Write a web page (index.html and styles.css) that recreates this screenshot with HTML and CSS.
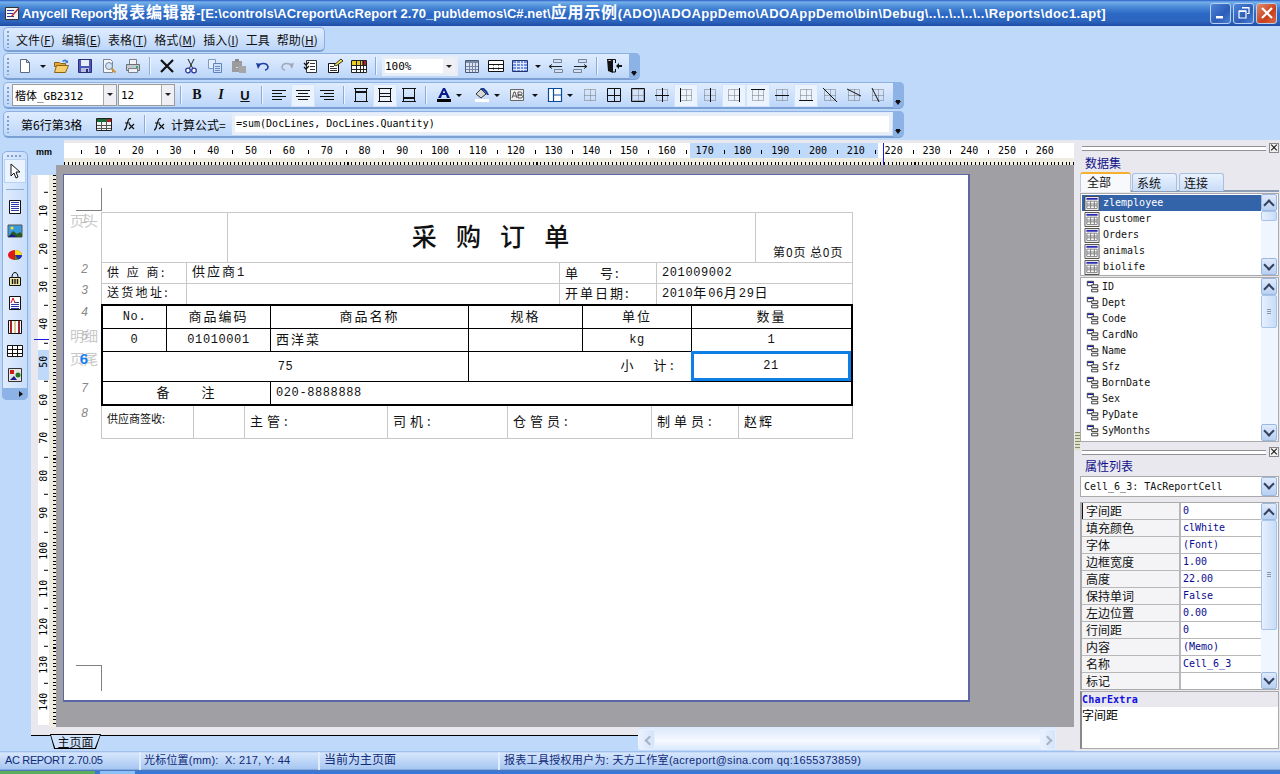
FILE: index.html
```html
<!DOCTYPE html>
<html lang="zh">
<head>
<meta charset="utf-8">
<title>Anycell Report</title>
<link rel="stylesheet" href="styles.css">
</head>
<body>
<svg class="defs" xmlns="http://www.w3.org/2000/svg">
<symbol id="i-new" viewBox="0 0 16 16"><path d="M3.500 1.500h6l3 3v10h-9z" fill="#fff" stroke="#5a6a80"/><path d="M9.500 1.500v3h3z" fill="#cfd8e4" stroke="#5a6a80"/></symbol>
<symbol id="i-open" viewBox="0 0 16 16"><path d="M1.500 4.500h5l1 1h5v3h-11z" fill="#e0a93a" stroke="#8a6414"/><path d="M1.500 14.500l2-7h12l-3 7z" fill="#f6cf6c" stroke="#8a6414"/><path d="M9 3c2-2 4-2 5 0l1-1v3h-3l1-1c-1-1-2-1-3 0" fill="#3a7ad0"/></symbol>
<symbol id="i-save" viewBox="0 0 16 16"><path d="M1.500 1.500h13v13h-13z" fill="#4a58b8" stroke="#2a2f78"/><path d="M4 2h8v6H4z" fill="#e8ecf4"/><path d="M4 10h8v4H4z" fill="#b8bcd8"/><path d="M9 11h2v3H9z" fill="#2a2f78"/></symbol>
<symbol id="i-prev" viewBox="0 0 16 16"><path d="M2.500 1.500h7l2 2v11h-9z" fill="#f4f6fa" stroke="#7a8494"/><circle cx="8" cy="8" r="3.500" fill="#cfe4f8" stroke="#7a8494"/><path d="M10.500 10.500l4 4" stroke="#d8942a" stroke-width="2"/></symbol>
<symbol id="i-print" viewBox="0 0 16 16"><path d="M4.500 1.500h7v5h-7z" fill="#f0f2f6" stroke="#7a8088"/><path d="M1.500 6.500h13v6h-13z" fill="#c4c8d0" stroke="#6a7078"/><path d="M3.500 10.500h9v4h-9z" fill="#eef0f4" stroke="#7a8088"/><path d="M11 8h2v2h-2z" fill="#2ab24a"/></symbol>
<symbol id="i-del" viewBox="0 0 16 16"><path d="M2 2l12 12M14 2L2 14" stroke="#111" stroke-width="2.200" fill="none"/></symbol>
<symbol id="i-cut" viewBox="0 0 16 16"><path d="M5 1l4.500 9M11 1L6.500 10" stroke="#222" fill="none"/><circle cx="5" cy="12.500" r="2.300" fill="#fff" stroke="#2a3aa0" stroke-width="1.300"/><circle cx="11" cy="12.500" r="2.300" fill="#fff" stroke="#2a3aa0" stroke-width="1.300"/></symbol>
<symbol id="i-copy" viewBox="0 0 16 16"><path d="M1.500 1.500h7v9h-7z" fill="#e4eefa" stroke="#7f9ac4"/><path d="M6.500 5.500h8v9h-8z" fill="#cfe0f6" stroke="#5f84bc"/><path d="M8 8.500h5M8 10.500h5M8 12.500h5" stroke="#6a8cc4"/></symbol>
<symbol id="i-paste" viewBox="0 0 16 16"><path d="M1 3h10v11H1z" fill="#9c9c9e"/><path d="M8 8h7v7H8z" fill="#a6a6a8"/><path d="M4 1h4v3H4z" fill="#8c8c8e"/><path d="M5 9h2v1H5z" fill="#d8d8d8"/></symbol>
<symbol id="i-undo" viewBox="0 0 16 16"><path d="M3 8c2-3 9-4 10 1 0 2-2 3-3 3" fill="none" stroke="#1c3fa4" stroke-width="1.600"/><path d="M1 5l5 1-3 5z" fill="#1c3fa4"/></symbol>
<symbol id="i-redo" viewBox="0 0 16 16"><path d="M13 8c-2-3-9-4-10 1 0 2 2 3 3 3" fill="none" stroke="#a4a8b4" stroke-width="1.600"/><path d="M15 5l-5 1 3 5z" fill="#a4a8b4"/></symbol>
<symbol id="i-check" viewBox="0 0 16 16"><path d="M3.500 2.500h10v12h-10z" fill="#fff" stroke="#333"/><path d="M7 5.500h5M7 8.500h5M7 11.500h5" stroke="#333"/><path d="M1 5l2 2 3-3M1 9l2 2 3-3" stroke="#111" fill="none" stroke-width="1.300"/></symbol>
<symbol id="i-prop" viewBox="0 0 16 16"><path d="M1.500 5.500h10v9h-10z" fill="#fff" stroke="#111"/><path d="M3 8.500h4M3 10.500h7M3 12.500h7" stroke="#333"/><path d="M7 7l7-6 2 2-7 5z" fill="#f4e04a" stroke="#333"/></symbol>
<symbol id="i-ctab" viewBox="0 0 16 16"><path d="M.5 2.500h15v12H.5z" fill="#fff" stroke="#222"/><path d="M1 3h10v4H1z" fill="#e8d020"/><path d="M11 3h4v4h-4z" fill="#a02828"/><path d="M1 7.500h14M1 11.500h14M5.500 3v11M9.500 3v11M12.500 3v11" stroke="#222"/></symbol>
<symbol id="i-cal" viewBox="0 0 16 16"><path d="M1.500 2.500h13v12h-13z" fill="#dfe4ee" stroke="#4a5a78"/><path d="M2 3h12v2H2z" fill="#7a8aa4"/><path d="M2 8.500h12M2 11.500h12M5.500 5v9M8.500 5v9M11.500 5v9" stroke="#7486a8"/></symbol>
<symbol id="i-tbl" viewBox="0 0 16 16"><path d="M.5 2.500h15v11H.5z" fill="#fff" stroke="#111"/><path d="M1 6.500h14M1 10.500h14" stroke="#111"/><path d="M5.500 7v6M10.500 7v6" stroke="#888" stroke-dasharray="1 1"/></symbol>
<symbol id="i-bgrid" viewBox="0 0 16 16"><path d="M.5 2.500h15v11H.5z" fill="#6f8fe0" stroke="#24346a"/><path d="M1 5.500h14M1 8.500h14M1 11.500h14M4.500 3v10M8.500 3v10M11.500 3v10" stroke="#dfe8fa"/></symbol>
<symbol id="i-swapl" viewBox="0 0 16 16"><path d="M5.500 1.500h8v3h-8zM6.500 11.500h8v3h-8z" fill="#d4e2f6" stroke="#7a8494"/><path d="M1 8.500h13M1 8.500l3-2M1 8.500l3 2" stroke="#222" fill="none"/></symbol>
<symbol id="i-swapr" viewBox="0 0 16 16"><path d="M6.500 1.500h8v3h-8zM1.500 11.500h8v3h-8z" fill="#d4e2f6" stroke="#7a8494"/><path d="M2 8.500h13M15 8.500l-3-2M15 8.500l-3 2" stroke="#222" fill="none"/></symbol>
<symbol id="i-door" viewBox="0 0 16 16"><path d="M1 1h6v14l-5-2z" fill="#111"/><path d="M2 2h4L3 3z" fill="#fff"/><path d="M7 1.500h2.500V5M9.500 11v3H7" fill="none" stroke="#111"/><path d="M10 8l3-3v2h3v2h-3v2z" fill="#111"/></symbol>
<symbol id="i-left" viewBox="0 0 16 16"><path d="M1 3.500h14M1 6.500h10M1 9.500h14M1 12.500h10" stroke="#111"/></symbol>
<symbol id="i-center" viewBox="0 0 16 16"><path d="M1 3.500h14M3 6.500h10M1 9.500h14M3 12.500h10" stroke="#111"/></symbol>
<symbol id="i-right" viewBox="0 0 16 16"><path d="M1 3.500h14M5 6.500h10M1 9.500h14M5 12.500h10" stroke="#111"/></symbol>
<symbol id="i-vt" viewBox="0 0 16 16"><path d="M1 1.500h14M1 14.500h14" stroke="#111"/><path d="M2.500 2v12M13.500 2v12" stroke="#111"/><path d="M3 5h10" stroke="#111" stroke-width="2"/></symbol>
<symbol id="i-vm" viewBox="0 0 16 16"><path d="M1 1.500h14M1 14.500h14M2.500 2v12M13.500 2v12" stroke="#111"/><path d="M3 6.500h10M3 9.500h10" stroke="#111"/></symbol>
<symbol id="i-vb" viewBox="0 0 16 16"><path d="M1 1.500h14M1 14.500h14M2.500 2v12M13.500 2v12" stroke="#111"/><path d="M3 11h10" stroke="#111" stroke-width="2"/></symbol>
<symbol id="i-fx" viewBox="0 0 16 16"><path d="M4 14c2 0 2-2 3-6l1-3c.5-2 1.500-3 3-2M5 7h5" fill="none" stroke="#111" stroke-width="1.200"/><path d="M9 8l5 5M14 8l-5 5" stroke="#111" stroke-width="1.200"/></symbol>
<symbol id="i-xtab" viewBox="0 0 16 16"><path d="M.5 2.500h15v12H.5z" fill="#f2f2f2" stroke="#222"/><path d="M1 3h14v3H1z" fill="#156a38"/><path d="M11 3h4v3h-4z" fill="#b02020"/><path d="M1 9.500h14M1 12.500h14M5.500 6v8M10.500 6v8" stroke="#555"/></symbol>
<symbol id="i-A" viewBox="0 0 16 16"><path d="M2 11L7 1h2l5 10h-3l-1-3H6l-1 3zM6.800 6h2.400L8 3.300z" fill="#0a1a8a"/><path d="M1 12h14v3H1z" fill="#000"/></symbol>
<symbol id="i-fill" viewBox="0 0 16 16"><path d="M2 7l5-5 5 5-5 4z" fill="#d8d8d8" stroke="#333"/><path d="M6 1h4l3 3 2 4h-2l-2-3z" fill="#1a3a9a"/><path d="M1 12h14v3H1z" fill="#fff"/></symbol>
<symbol id="i-AB" viewBox="0 0 16 16"><path d="M1.500 2.500h13v11h-13z" fill="#f0f0f0" stroke="#666"/><path d="M3 11l2-6h1l2 6M4 9h3M9 5v6h3a1.500 1.500 0 0 0 0-3H9m0 0h2.500a1.500 1.500 0 0 0 0-3H9" fill="none" stroke="#333" stroke-width=".8"/></symbol>
<symbol id="i-panes" viewBox="0 0 16 16"><path d="M1.500 1.500h13v13h-13zM6.500 1.500v13M6.500 8h8" fill="#fff" stroke="#0a4a9a" stroke-width="1.200"/></symbol>
<symbol id="dg" viewBox="0 0 16 16"><path d="M2.500 2.500h11v11h-11zM2.500 8.500h11M8.500 2.500v11" fill="none" stroke="#777" stroke-dasharray="1 1"/></symbol>
<symbol id="b-none" viewBox="0 0 16 16"><use href="#dg"/></symbol>
<symbol id="b-all" viewBox="0 0 16 16"><path d="M1.500 1.500h13v13h-13zM1.500 8.500h13M8.500 1.500v13" fill="none" stroke="#111"/></symbol>
<symbol id="b-out" viewBox="0 0 16 16"><use href="#dg"/><path d="M1.500 1.500h13v13h-13z" fill="none" stroke="#111"/></symbol>
<symbol id="b-in" viewBox="0 0 16 16"><use href="#dg"/><path d="M1 8.500h14M8.500 1v14" fill="none" stroke="#111"/></symbol>
<symbol id="b-l" viewBox="0 0 16 16"><use href="#dg"/><path d="M2.500 1v14" stroke="#111"/></symbol>
<symbol id="b-c" viewBox="0 0 16 16"><use href="#dg"/><path d="M8.500 1v14" stroke="#111"/></symbol>
<symbol id="b-r" viewBox="0 0 16 16"><use href="#dg"/><path d="M13.500 1v14" stroke="#111"/></symbol>
<symbol id="b-t" viewBox="0 0 16 16"><use href="#dg"/><path d="M1 2.500h14" stroke="#111"/></symbol>
<symbol id="b-m" viewBox="0 0 16 16"><use href="#dg"/><path d="M1 8.500h14" stroke="#111"/></symbol>
<symbol id="b-b" viewBox="0 0 16 16"><use href="#dg"/><path d="M1 13.500h14" stroke="#111"/></symbol>
<symbol id="b-d1" viewBox="0 0 16 16"><use href="#dg"/><path d="M1 1l14 14" stroke="#111"/></symbol>
<symbol id="b-d2" viewBox="0 0 16 16"><use href="#dg"/><path d="M1 2l14 7" stroke="#111"/></symbol>
<symbol id="b-d3" viewBox="0 0 16 16"><use href="#dg"/><path d="M2 1l7 14" stroke="#111"/></symbol>
<symbol id="p-arrow" viewBox="0 0 16 16"><path d="M4 1v12l3-3 2 5 2-1-2-5h4z" fill="#fff" stroke="#111"/></symbol>
<symbol id="p-text" viewBox="0 0 16 16"><path d="M2.500 1.500h11v13h-11z" fill="#fff" stroke="#111"/><path d="M4 3.500h8M4 5.500h8M4 7.500h8M4 9.500h8M4 11.500h8" stroke="#2a3aa8"/></symbol>
<symbol id="p-img" viewBox="0 0 16 16"><path d="M1 2h14v12H1z" fill="#3a9ae0" stroke="#555"/><path d="M1 14l5-6 4 3 3-2 2 2v3z" fill="#2a5a20"/><path d="M1 14l4-3 5 3z" fill="#1a1a90"/><circle cx="5" cy="5" r="1.500" fill="#f4e820"/></symbol>
<symbol id="p-pie" viewBox="0 0 16 16"><path d="M8 3a7 5 0 1 0 .01 0z" fill="#e01818"/><path d="M8 8V3a7 5 0 0 1 7 5z" fill="#f0e020"/><path d="M8 8h7a7 5 0 0 1-4 4.500z" fill="#1a2ab8"/><path d="M8 8l3 4.500a7 5 0 0 1-3 .5z" fill="#20a020"/></symbol>
<symbol id="p-bag" viewBox="0 0 16 16"><path d="M2.500 6.500h11v8h-11z" fill="#f4e6a0" stroke="#111"/><path d="M5 6c0-6 6-6 6 0" fill="none" stroke="#111"/><path d="M5.500 8v5M8 8v5M10.500 8v5" stroke="#111" stroke-width="1.400"/></symbol>
<symbol id="p-rich" viewBox="0 0 16 16"><path d="M2.500 1.500h11v13h-11z" fill="#fff" stroke="#111"/><path d="M8 7.500h4M4 9.500h8M4 11.500h8M4 13.500h8" fill="none" stroke="#2a3aa8"/><path d="M4 8l2-5 2 5" fill="none" stroke="#d01010"/></symbol>
<symbol id="p-bars" viewBox="0 0 16 16"><path d="M1.500 1.500h13v13h-13z" fill="#fff" stroke="#111"/><path d="M4 2v12" stroke="#b02020" stroke-width="2"/><path d="M8 2v12" stroke="#d8c890" stroke-width="2"/><path d="M12 2v12" stroke="#a02030" stroke-width="2"/></symbol>
<symbol id="p-grid" viewBox="0 0 16 16"><path d="M.5 2.500h15v11H.5zM.5 6.500h15M.5 10.500h15M5.500 2.500v11M10.500 2.500v11" fill="#fff" stroke="#111"/></symbol>
<symbol id="p-pic" viewBox="0 0 16 16"><path d="M1.500 1.500h13v13h-13z" fill="#e4e4e4" stroke="#333"/><path d="M3 3h4v4H3z" fill="#d01818"/><circle cx="11" cy="8" r="2.500" fill="#20781c"/><path d="M3 13l4-4 3 4z" fill="#1a1a90"/></symbol>
<symbol id="l-table" viewBox="0 0 16 16"><path d="M.5.500h15v15H.5z" fill="#fff" stroke="#444"/><path d="M2 2h12v2H2z" fill="#2a2ab0"/><path d="M2.500 5.500h11v8h-11zM2.500 8.500h11M2.500 10.500h11M6.500 5.500v8M10.500 5.500v8" fill="none" stroke="#777"/></symbol>
<symbol id="l-field" viewBox="0 0 16 16"><path d="M1.500 1.500h7v5h-7z" fill="#fff" stroke="#222"/><path d="M2 2h6v1.500H2z" fill="#1a1aa8"/><path d="M6.500 5.500h7v3h-7zM6.500 10.500h7v3h-7z" fill="#fff" stroke="#222"/></symbol>
</svg>

<header class="titlebar">
  <svg class="app-icon" viewBox="0 0 16 16"><path d="M1.500 2.500h13v12h-13z" fill="#f4f4f4" stroke="#333"/><path d="M3 5.500h7M3 8.500h6M3 11.500h7" stroke="#2a3a90"/><path d="M7 11l7-8 1 1-7 8z" fill="#c02828"/></svg>
  <span class="title-text"><span class="ta">Anycell Report</span><span class="cj">报表编辑器</span><span class="tb">-[E:\controls\ACreport\AcReport 2.70_pub\demos\C#.net\</span><span class="cj">应用示例</span><span class="tc">(ADO)\ADOAppDemo\ADOAppDemo\bin\Debug\..\..\..\..\..\Reports\doc1.apt]</span></span>
  <div class="win-btns">
    <span class="win-btn"><svg viewBox="0 0 16 16"><path d="M3 11h7v2.500H3z" fill="#fff"/></svg></span>
    <span class="win-btn"><svg viewBox="0 0 16 16"><path d="M6 2.500h7v6h-2M3 6h7v7H3z" fill="none" stroke="#fff" stroke-width="1.200"/><path d="M6 2h7v1.500H6zM3 5.500h7V7H3z" fill="#fff"/></svg></span>
    <span class="win-btn close"><svg viewBox="0 0 16 16"><path d="M3 3l10 10M13 3L3 13" stroke="#fff" stroke-width="2.200"/></svg></span>
  </div>
</header>

<section class="bars">
  <nav class="tbar menu">
    <i class="grip"></i>
    <span class="mi">文件(<u>F</u>)</span><span class="mi">编辑(<u>E</u>)</span><span class="mi">表格(<u>T</u>)</span><span class="mi">格式(<u>M</u>)</span><span class="mi">插入(<u>I</u>)</span><span class="mi">工具</span><span class="mi">帮助(<u>H</u>)</span>
  </nav>
  <div class="tbar t1">
    <i class="grip"></i>
    <span class="btn"><svg><use href="#i-new"/></svg></span><span class="dd"></span>
    <span class="btn"><svg><use href="#i-open"/></svg></span>
    <span class="btn"><svg><use href="#i-save"/></svg></span>
    <span class="btn"><svg><use href="#i-prev"/></svg></span>
    <span class="btn"><svg><use href="#i-print"/></svg></span>
    <i class="sep"></i>
    <span class="btn"><svg><use href="#i-del"/></svg></span>
    <span class="btn"><svg><use href="#i-cut"/></svg></span>
    <span class="btn"><svg><use href="#i-copy"/></svg></span>
    <span class="btn"><svg><use href="#i-paste"/></svg></span>
    <span class="btn"><svg><use href="#i-undo"/></svg></span>
    <span class="btn"><svg><use href="#i-redo"/></svg></span>
    <span class="btn"><svg><use href="#i-check"/></svg></span>
    <span class="btn"><svg><use href="#i-prop"/></svg></span>
    <span class="btn"><svg><use href="#i-ctab"/></svg></span>
    <i class="sep"></i>
    <span class="combo zoomc"><b>100%</b><em class="arrow"></em></span>
    <span class="btn"><svg><use href="#i-cal"/></svg></span>
    <span class="btn"><svg><use href="#i-tbl"/></svg></span>
    <span class="btn"><svg><use href="#i-bgrid"/></svg></span><span class="dd"></span>
    <span class="btn"><svg><use href="#i-swapl"/></svg></span>
    <span class="btn"><svg><use href="#i-swapr"/></svg></span>
    <i class="sep"></i>
    <span class="btn"><svg><use href="#i-door"/></svg></span>
    <span class="cap"></span>
  </div>
  <div class="tbar t2">
    <i class="grip"></i>
    <span class="combo fontc"><b>楷体_GB2312</b><em class="arrow"></em></span>
    <span class="combo sizec"><b>12</b><em class="arrow"></em></span>
    <i class="sep s-font"></i>
    <span class="btn"><strong class="fmt">B</strong></span>
    <span class="btn"><strong class="fmt it">I</strong></span>
    <span class="btn"><strong class="fmt un">U</strong></span>
    <i class="sep"></i>
    <span class="btn"><svg><use href="#i-left"/></svg></span>
    <span class="btn on"><svg><use href="#i-center"/></svg></span>
    <span class="btn"><svg><use href="#i-right"/></svg></span>
    <i class="sep"></i>
    <span class="btn"><svg><use href="#i-vt"/></svg></span>
    <span class="btn on"><svg><use href="#i-vm"/></svg></span>
    <span class="btn"><svg><use href="#i-vb"/></svg></span>
    <i class="sep"></i>
    <span class="btn nar g3"><svg><use href="#i-A"/></svg></span><span class="dd"></span>
    <span class="btn nar g8"><svg><use href="#i-fill"/></svg></span><span class="dd"></span>
    <span class="btn nar g5"><svg><use href="#i-AB"/></svg></span><span class="dd g3"></span>
    <span class="btn nar g5"><svg><use href="#i-panes"/></svg></span><span class="dd"></span>
    <span class="btn g3"><svg><use href="#b-none"/></svg></span>
    <span class="btn"><svg><use href="#b-all"/></svg></span>
    <span class="btn"><svg><use href="#b-out"/></svg></span>
    <span class="btn"><svg><use href="#b-in"/></svg></span>
    <span class="btn on"><svg><use href="#b-l"/></svg></span>
    <span class="btn"><svg><use href="#b-c"/></svg></span>
    <span class="btn on"><svg><use href="#b-r"/></svg></span>
    <span class="btn on"><svg><use href="#b-t"/></svg></span>
    <span class="btn"><svg><use href="#b-m"/></svg></span>
    <span class="btn on"><svg><use href="#b-b"/></svg></span>
    <span class="btn"><svg><use href="#b-d1"/></svg></span>
    <span class="btn"><svg><use href="#b-d2"/></svg></span>
    <span class="btn"><svg><use href="#b-d3"/></svg></span>
    <span class="cap"></span>
  </div>
  <div class="tbar t3">
    <i class="grip"></i>
    <span class="cellpos">第6行第3格</span>
    <span class="btn"><svg><use href="#i-xtab"/></svg></span>
    <span class="btn"><svg><use href="#i-fx"/></svg></span>
    <i class="sep"></i>
    <span class="btn fxb"><svg><use href="#i-fx"/></svg></span>
    <span class="fxlabel">计算公式=</span>
    <span class="fxinput">=sum(DocLines, DocLines.Quantity)</span>
    <span class="cap"></span>
  </div>
</section>

<main class="work">
  <aside class="palette-col">
    <div class="palette">
      <i class="pal-grip"></i>
      <span class="pbtn sel"><svg><use href="#p-arrow"/></svg></span>
      <i class="pal-sep"></i>
      <span class="pbtn"><svg><use href="#p-text"/></svg></span>
      <span class="pbtn"><svg><use href="#p-img"/></svg></span>
      <span class="pbtn"><svg><use href="#p-pie"/></svg></span>
      <span class="pbtn"><svg><use href="#p-bag"/></svg></span>
      <span class="pbtn"><svg><use href="#p-rich"/></svg></span>
      <span class="pbtn"><svg><use href="#p-bars"/></svg></span>
      <span class="pbtn"><svg><use href="#p-grid"/></svg></span>
      <span class="pbtn"><svg><use href="#p-pic"/></svg></span>
      <span class="pal-foot"></span>
    </div>
  </aside>

  <section class="center">
    <div class="top-ruler-row">
      <span class="mm">mm</span>
      <div class="hruler">
        <div class="hr-nums">
          <span>10</span><span>20</span><span>30</span><span>40</span><span>50</span><span>60</span><span>70</span><span>80</span><span>90</span><span>100</span><span>110</span><span>120</span><span>130</span><span>140</span><span>150</span><span>160</span><span>170</span><span>180</span><span>190</span><span>200</span><span>210</span><span>220</span><span>230</span><span>240</span><span>250</span><span>260</span>
          <i class="hr-sel"></i><i class="hr-mark"></i>
        </div>
        <div class="hr-ticks"></div>
      </div>
    </div>
    <div class="canvas-row">
      <div class="vruler">
        <i class="vr-gutter"></i>
        <div class="vr-nums">
          <i class="vr-sel"></i><i class="vr-mark"></i>
          <span>10</span><span>20</span><span>30</span><span>40</span><span>50</span><span>60</span><span>70</span><span>80</span><span>90</span><span>100</span><span>110</span><span>120</span><span>130</span><span>140</span>
        </div>
        <i class="vr-ticks"></i>
      </div>
      <div class="canvas">
        <div class="page">
          <i class="crop tl"></i><i class="crop bl"></i>
          <div class="gutter">
            <b class="band b-head">页头</b><b class="band b-detail">明细</b><b class="band b-foot">页尾</b>
            <span class="g-1">1</span><span class="g-2">2</span><span class="g-3">3</span><span class="g-4">4</span><span class="g-5">5</span><span class="g-6">6</span><span class="g-7">7</span><span class="g-8">8</span>
          </div>
          <div class="report">
            <div class="r r1"><span></span><span class="title">采 购 订 单</span><span class="pageno">第0页 总0页</span></div>
            <div class="r r2"><span class="wd">供 应 商:</span><span><span class="m">供应商<span class="n">1</span></span></span><span class="wd">单　 号:</span><span><span class="n">201009002</span></span></div>
            <div class="r r3"><span class="wd">送货地址:</span><span></span><span>开单日期:</span><span><span class="m"><span class="n">2010</span>年<span class="n">06</span>月<span class="n">29</span>日</span></span></div>
            <div class="thick">
              <div class="r r4"><span class="ctr"><span class="n">No.</span></span><span class="ctr">商品编码</span><span class="ctr">商品名称</span><span class="ctr">规格</span><span class="ctr">单位</span><span class="ctr">数量</span></div>
              <div class="r r5"><span class="ctr"><span class="n">0</span></span><span class="ctr"><span class="n">01010001</span></span><span>西洋菜</span><span></span><span class="ctr"><span class="n">kg</span></span><span class="ctr"><span class="n">1</span></span></div>
              <div class="r r6"><span class="ctr"><span class="n">75</span></span><span class="rgt">小　计:</span><span class="ctr selected"><span class="n">21</span></span></div>
              <div class="r r7"><span class="ctr">备　　注</span><span><span class="n">020-8888888</span></span></div>
            </div>
            <div class="r r8"><span class="sm">供应商签收:</span><span></span><span class="lab">主管:</span><span class="lab">司机:</span><span class="lab">仓管员:</span><span class="lab">制单员:</span><span>赵辉</span></div>
          </div>
        </div>
      </div>
    </div>
    <div class="tabs-row">
      <span class="page-tab">主页面</span>
      <div class="hscroll"><span class="hbtn"></span><span class="hbtn next"></span></div>
    </div>
  </section>

  <aside class="side">
    <div class="splitter"><i></i></div>
    <div class="side-inner">
      <div class="sec-head"><i></i><span class="x"></span></div>
      <h2 class="sec-title">数据集</h2>
      <div class="tabs"><span class="tab act">全部</span><span class="tab">系统</span><span class="tab">连接</span></div>
      <div class="list list-a">
        <ul>
          <li class="sel"><svg><use href="#l-table"/></svg>zlemployee</li>
          <li><svg><use href="#l-table"/></svg>customer</li>
          <li><svg><use href="#l-table"/></svg>Orders</li>
          <li><svg><use href="#l-table"/></svg>animals</li>
          <li><svg><use href="#l-table"/></svg>biolife</li>
        </ul>
        <div class="sb"><span class="sb-btn up"></span><span class="sb-thumb th-a"></span><span class="sb-btn down"></span></div>
      </div>
      <div class="list list-b">
        <ul>
          <li><svg><use href="#l-field"/></svg>ID</li>
          <li><svg><use href="#l-field"/></svg>Dept</li>
          <li><svg><use href="#l-field"/></svg>Code</li>
          <li><svg><use href="#l-field"/></svg>CardNo</li>
          <li><svg><use href="#l-field"/></svg>Name</li>
          <li><svg><use href="#l-field"/></svg>Sfz</li>
          <li><svg><use href="#l-field"/></svg>BornDate</li>
          <li><svg><use href="#l-field"/></svg>Sex</li>
          <li><svg><use href="#l-field"/></svg>PyDate</li>
          <li><svg><use href="#l-field"/></svg>SyMonths</li>
        </ul>
        <div class="sb"><span class="sb-btn up"></span><span class="sb-thumb th-b"></span><span class="sb-btn down"></span></div>
      </div>
      <div class="sec-head second"><i></i><span class="x"></span></div>
      <h2 class="sec-title">属性列表</h2>
      <div class="objcombo"><span>Cell_6_3: TAcReportCell</span><span class="sb-btn down"></span></div>
      <div class="props">
        <div class="prop-rows">
          <div class="p cur"><span>字间距</span><span>0</span></div>
          <div class="p"><span>填充颜色</span><span>clWhite</span></div>
          <div class="p"><span>字体</span><span>(Font)</span></div>
          <div class="p"><span>边框宽度</span><span>1.00</span></div>
          <div class="p"><span>高度</span><span>22.00</span></div>
          <div class="p"><span>保持单词</span><span>False</span></div>
          <div class="p"><span>左边位置</span><span>0.00</span></div>
          <div class="p"><span>行间距</span><span>0</span></div>
          <div class="p"><span>内容</span><span>(Memo)</span></div>
          <div class="p"><span>名称</span><span>Cell_6_3</span></div>
          <div class="p"><span>标记</span><span></span></div>
        </div>
        <div class="sb"><span class="sb-btn up"></span><span class="sb-thumb th-c"></span><span class="sb-btn down"></span></div>
      </div>
      <div class="desc"><strong>CharExtra</strong><p>字间距</p></div>
    </div>
  </aside>
</main>

<footer class="status">
  <span class="st st1">AC REPORT 2.70.05</span>
  <span class="st st2">光标位置(mm):&nbsp; X: 217, Y: 44</span>
  <span class="st st3">当前为主页面</span>
  <span class="st st4">报表工具授权用户为: 天方工作室(acreport@sina.com qq:1655373859)</span>
</footer>
<div class="taskstrip"><i class="start"></i><i class="task"></i></div>
</body>
</html>
```

FILE: styles.css
```css
* { box-sizing: border-box; }
html, body { margin: 0; padding: 0; }
body {
  width: 1280px; height: 774px; overflow: hidden;
  background: #bfd9fb;
  font-family: "Noto Sans CJK SC", "Liberation Sans", sans-serif;
  font-size: 12px; color: #000;
}
.defs { display: none; }
i, em { font-style: normal; display: block; }
svg { width: 16px; height: 16px; display: block; }

/* title bar */
.titlebar {
  height: 26px; display: flex; align-items: center; padding: 0 3px 0 4px;
  background: linear-gradient(#2a5cc8 0, #74b0ea 2px, #4a8ad8 7px, #2b67c4 14px, #2d66be 21px, #1f4ca6 26px);
  color: #fff;
}
.app-icon { width: 16px; height: 16px; margin-right: 2px; flex: none; }
.title-text {
  font: bold 13px "Liberation Sans", "Noto Sans CJK SC", sans-serif;
  white-space: nowrap; line-height: 26px;
}
.ta { letter-spacing: -.1px; }
.tb { letter-spacing: .06px; }
.tc { letter-spacing: .39px; }
.cj { font-size: 16px; letter-spacing: .8px; font-weight: 700; }
.win-btns { margin-left: auto; display: flex; gap: 2px; }
.win-btn {
  width: 21px; height: 21px; border: 1px solid #b8d0f0; border-radius: 3px;
  background: linear-gradient(135deg, #4d85d8, #2c5cb8 60%, #4a80d4);
  display: flex; align-items: center; justify-content: center;
}
.win-btn.close { background: linear-gradient(135deg, #e28a6a, #c8401c 60%, #d86a44); }

/* toolbars */
.bars { height: 114px; padding: 1px 0 0 3px; display: flex; flex-direction: column; }
.tbar {
  display: flex; align-items: center; height: 27px; position: relative;
  background: linear-gradient(#dfecfe, #cfe2fc 50%, #bcd6f9);
  border: 1px solid #8eb0e0; border-bottom: 2px solid #7ba0d4; border-radius: 5px;
}
.menu { width: 322px; margin-bottom: 1px; }
.t1 { width: 637px; margin-bottom: 2px; }
.t2, .t3 { width: 901px; margin-bottom: 2px; }
.grip {
  width: 2px; height: 17px; margin: 0 4px 0 3px; flex: none;
  background: repeating-linear-gradient(#7f9fcc 0 2px, transparent 2px 4px);
}
.mi { margin-right: 7px; white-space: nowrap; font-size: 12px; color: #111; }
.mi:first-of-type { margin-left: 3px; }
.btn {
  width: 24px; height: 23px; flex: none; display: flex; align-items: center; justify-content: center;
}
.btn.nar { width: 20px; }
.btn.on { background: #eaf3fe; box-shadow: inset 0 0 0 1px #d2e4fb; }
.g8 { margin-left: 8px; }
.g5 { margin-left: 5px; }
.g3 { margin-left: 3px; }
.dd { width: 10px; height: 23px; flex: none; position: relative; }
.dd::after {
  content: ""; position: absolute; left: 2px; top: 10px;
  border: 3px solid transparent; border-top: 3px solid #111; border-bottom: 0;
}
.t1 .dd { width: 12px; }
.t1 .dd::after { left: 3px; }
.sep {
  width: 2px; height: 18px; margin: 0 4px; flex: none;
  background: #8eabd2; border-right: 1px solid #eef5ff;
}
.combo {
  height: 22px; display: flex; align-items: center; background: #fff; flex: none;
  border: 1px solid #9a9a9a; padding-left: 2px;
}
.combo b { font: 11px "DejaVu Sans Mono", "Noto Sans CJK SC", monospace; flex: 1; white-space: nowrap; }
.arrow {
  width: 13px; height: 100%; background: #f0f0f4; position: relative; border-left: 1px solid #aaa;
}
.arrow::after {
  content: ""; position: absolute; left: 3px; top: 8px;
  border: 3px solid transparent; border-top-color: #222; border-bottom: 0;
}
.zoomc { width: 76px; margin-right: 2px; border: 3px solid #e8eef8; height: 20px; margin-left: 1px; padding-left: 0; }
.zoomc .arrow { border-left: 0; width: 12px; }
.zoomc .arrow::after { top: 6px; }
.fontc { width: 105px; margin-left: -1px; }
.sizec { width: 57px; margin-left: 1px; }
.s-font { margin: 0 3px 0 5px; }
.fmt { font: bold 14px "Liberation Serif", serif; color: #111; }
.fmt.it { font-style: italic; }
.fmt.un { text-decoration: underline; font-size: 13px; font-family: "Liberation Sans", sans-serif; }
.cap {
  margin-left: auto; width: 11px; height: 26px; align-self: flex-start; margin-top: -1px; margin-right: -1px;
  background: #8db2e6; border-radius: 0 5px 5px 0; position: relative;
}
.cap::after {
  content: ""; position: absolute; left: 2px; bottom: 3px;
  border: 3.500px solid transparent; border-top: 4px solid #111; border-bottom: 0;
  box-shadow: 0 -2px 0 -1px #111;
}
.cellpos { margin: 0 11px 0 8px; font-size: 12px; width: 60px; white-space: nowrap; }
.fxb { width: 18px; margin-left: -1px; }
.fxlabel { font-size: 12px; margin-left: 4px; width: 58px; white-space: nowrap; }
.fxinput {
  width: 660px; height: 22px; margin-left: 3px; background: #fff; border: 3px solid #e8eef8;
  font: 10px/15px "DejaVu Sans Mono", monospace; padding-left: 1px; white-space: nowrap;
}

/* work area */
.work { display: flex; height: 611px; }
.palette-col { width: 31px; flex: none; padding: 11px 0 0 2px; }
.palette {
  width: 26px; height: 249px; background: linear-gradient(90deg, #dfecfe, #c8ddfb);
  border: 1px solid #8eb0e0; border-radius: 5px; position: relative;
  display: flex; flex-direction: column; align-items: center;
}
.pal-grip {
  width: 16px; height: 2px; margin: 3px 0 2px;
  background: repeating-linear-gradient(90deg, #7f9fcc 0 2px, transparent 2px 4px);
}
.pbtn { width: 22px; height: 24px; display: flex; align-items: center; justify-content: center; flex: none; }
.pbtn.sel { background: #eaf3fe; box-shadow: inset 0 0 0 1px #b8d2f4; }
.pal-sep { width: 18px; height: 1px; background: #8eabd2; margin: 6px 0 5px; flex: none; }
.pal-foot {
  position: absolute; left: -1px; right: -1px; bottom: -1px; height: 12px;
  background: #8db2e6; border-radius: 0 0 5px 5px;
}
.pal-foot::after {
  content: ""; position: absolute; right: 5px; top: 3px;
  border: 3.500px solid transparent; border-left: 4px solid #111; border-right: 0;
}

.center { width: 1043px; flex: none; display: flex; flex-direction: column; }
.top-ruler-row { height: 25px; display: flex; flex: none; }
.mm { width: 33px; padding: 5px 0 0 5px; font: bold 9px/14px "Liberation Sans", sans-serif; flex: none; }
.hruler { flex: 1; display: flex; flex-direction: column; background: #e9e8ee; padding-top: 3px; }
.hr-nums {
  height: 15px; display: flex; position: relative; padding-left: 17px;
  background-color: #fff;
}
.hr-nums span {
  width: 37.800px; flex: none; text-align: center; font: 10px/15px "DejaVu Sans Mono", monospace;
  position: relative; z-index: 1; white-space: nowrap;
}
.hr-nums span::before, .vr-nums span::before {
  content: ""; position: absolute; background: #000;
}
.hr-nums span::before { left: 0; top: 7px; width: 1px; height: 4px; }
.hr-sel { position: absolute; left: 626px; width: 188px; top: 0; bottom: 0; background: #bfd9fb; }
.hr-mark { position: absolute; left: 819px; width: 1px; top: 0; bottom: -7px; background: #1a1ae0; z-index: 2; }
.hr-ticks {
  height: 7px; background-color: #efece2;
  background-image: repeating-linear-gradient(90deg, #000 0 1px, transparent 1px 3.780px);
  background-size: 100% 3px; background-position: 0 100%; background-repeat: no-repeat;
}
.canvas-row { height: 562px; display: flex; flex: none; }
.vruler { width: 25px; margin-top: 10px; display: flex; flex: none; background: #e9e8ee; position: relative; padding-bottom: 2px; }
.vr-gutter { width: 7px; }
.vr-nums { width: 11px; background: #fff; padding-top: 17px; position: relative; }
.vr-nums span {
  display: block; height: 37.800px; writing-mode: vertical-rl; transform: rotate(180deg);
  text-align: center; font: 10px/11px "DejaVu Sans Mono", monospace; position: relative; z-index: 1;
}
.vr-nums span::before { left: 1px; bottom: 0; width: 4px; height: 1px; }
.vr-sel { position: absolute; left: 0; right: 0; top: 175px; height: 30px; background: #bfd9fb; }
.vr-mark { position: absolute; left: -4px; right: 0; top: 164px; height: 1px; background: #1a1ae0; }
.vr-ticks {
  width: 7px; background-color: #efece2; margin-bottom: -2px;
  background-image: repeating-linear-gradient(#000 0 1px, transparent 1px 3.780px);
  background-size: 3px 100%; background-position: 100% 0; background-repeat: no-repeat;
}
.canvas { flex: 1; background: #a09fa3; padding: 9px 0 0 7px; }

/* page */
.page {
  width: 907px; height: 528px; background: #fff; position: relative;
  border: 1px solid #5c65a6; border-width: 1px 2px 2px 1px;
  display: flex; padding-top: 37px;
}
.crop { position: absolute; width: 26px; border: 0 solid #808080; }
.crop.tl { left: 12px; top: 13px; height: 23px; border-right-width: 1px; border-bottom-width: 1px; }
.crop.bl { left: 12px; top: 490px; height: 26px; border-right-width: 1px; border-top-width: 1px; }
.gutter { width: 37px; flex: none; position: relative; }
.gutter span {
  position: absolute; right: 13px; font: italic 12px "Liberation Sans", sans-serif; color: #888;
}
.gutter .g-1, .gutter .g-5 { color: #bbb; }
.g-1 { top: 0; }
.g-2 { top: 50px; } .g-3 { top: 71px; } .g-4 { top: 93px; } .g-5 { top: 117px; }
.gutter .g-6 { top: 138px; color: #1a80ee; font: bold 15px "Liberation Sans", sans-serif; }
.g-7 { top: 169px; } .g-8 { top: 194px; }
.band {
  position: absolute; left: 6px; font-weight: 400; font-size: 14px; color: #c8c8c8; white-space: nowrap; line-height: 16px;
}
.b-head { top: 0; } .b-detail { top: 115px; } .b-foot { top: 138px; }
.report { width: 752px; flex: none; }
.r { display: grid; font: 13px/1 "Noto Sans CJK SC", sans-serif; letter-spacing: 2px; color: #111; }
.r > span {
  display: flex; align-items: center; padding: 0 0 4px 5px; white-space: pre; border: 0 solid #c8c8c8;
}
.r > span.ctr { justify-content: center; padding: 0 0 4px; }
.r > span.rgt { justify-content: flex-end; padding-right: 14px; letter-spacing: 3.500px; }
.r > span.sm { font-size: 11px; letter-spacing: 0; padding-bottom: 8px; }
.r > span.lab { letter-spacing: 4px; }
.n { font: 12px/1 "Liberation Mono", monospace; letter-spacing: .6px; }
.r > span > .n { margin-top: 4px; }
.r1, .r2, .r3, .r8 { border-right: 1px solid #c8c8c8; }
.r1 > span, .r2 > span, .r3 > span, .r8 > span { border-left-width: 1px; border-top-width: 1px; }
.r1 { height: 50px; grid-template-columns: 126px 528px 98px; }
.r2 { height: 21px; grid-template-columns: 85px 373px 97px 197px; }
.r3 { height: 21px; grid-template-columns: 85px 373px 97px 197px; }
.r2 > span.wd { padding-bottom: 2px; }
.r2 > span.wd:first-child { font-size: 12px; letter-spacing: 2.500px; }
.r3 > span.wd:first-child { font-size: 12px; letter-spacing: 2.300px; }
.r8 {
  height: 33px; grid-template-columns: 92px 51px 143px 120px 144px 87px 115px;
  border-bottom: 1px solid #c8c8c8;
}
.r8 > span { border-top-width: 0; }
.r1 .title { justify-content: center; padding: 0 0 4px; font: 500 25px/1 "Noto Sans CJK SC", sans-serif; letter-spacing: 2px; word-spacing: 9.500px; color: #111; }
.r1 .pageno { align-items: flex-end; padding: 0 0 2px 17px; font: 12px/16px "Noto Sans CJK SC", sans-serif; letter-spacing: .9px; white-space: nowrap; }
.thick { border: 2px solid #000; height: 102px; }
.thick .r > span { border-left: 1px solid #000; border-top: 1px solid #000; }
.thick .r > span:first-child { border-left: 0; }
.thick .r:first-child > span { border-top: 0; }
.r4 { height: 22px; grid-template-columns: 63px 104px 198px 114px 109px 160px; }
.r5 { height: 23px; grid-template-columns: 63px 104px 198px 114px 109px 160px; }
.r6 { height: 30px; grid-template-columns: 365px 223px 160px; }
.r7 { height: 23px; grid-template-columns: 167px 581px; }
.thick .r > span.selected { border: 3px solid #0f7fe8; }

/* tabs row */
.tabs-row { height: 24px; background: #bfd9fb; position: relative; flex: none; display: flex; }
.tabs-row::before {
  content: ""; position: absolute; left: 0; width: 607px; top: 0; height: 8px;
  background: #e9e8ee; border-bottom: 1px solid #000;
}
.tabs-row::after {
  content: ""; position: absolute; left: 1025px; right: 0; top: 0; height: 23px; background: #e9e8ee;
}
.page-tab {
  position: relative; isolation: isolate; margin: 7px 0 0 19px; width: 51px; height: 15px;
  text-align: center; font-size: 12px; line-height: 15px; color: #111;
  background: #000; clip-path: polygon(0 0, 100% 0, 90% 100%, 8% 100%);
}
.page-tab::before {
  content: ""; position: absolute; inset: 1px 0 1px 0; z-index: -1;
  background: #cfe2fc; clip-path: polygon(2% 0, 98% 0, 88% 100%, 10% 100%);
}
.hscroll {
  position: absolute; left: 607px; right: 18px; top: 0; height: 23px;
  background: linear-gradient(#dbe8fb, #f6f9ff 60%, #d8e8fb);
  display: flex; justify-content: space-between; padding: 2px 0 0 1px;
}
.hbtn {
  width: 16px; height: 21px; background: linear-gradient(90deg, #e8f1fe, #d4e4fa); border: 1px solid #e6effc; border-radius: 2px; position: relative;
}
.hbtn::after {
  content: ""; position: absolute; left: 6px; top: 7px; width: 5px; height: 5px;
  border: 2px solid #a8b4c4; border-width: 0 0 2px 2px; transform: rotate(45deg);
}
.hbtn.next::after { left: 3px; transform: rotate(225deg); }

/* side */
.side { width: 206px; flex: none; display: flex; background: #e9e8ee; }
.splitter { width: 6px; flex: none; position: relative; }
.splitter i {
  position: absolute; left: 1px; top: 292px; width: 5px; height: 18px; background: #dfe0c4;
  background-image: repeating-linear-gradient(#7f8f70 0 1px, transparent 1px 3px);
}
.side-inner { width: 199px; padding-top: 3px; display: flex; flex-direction: column; }
.sec-head { height: 10px; display: flex; align-items: center; flex: none; }
.sec-head i { margin-left: 2px; width: 184px; height: 5px; border-top: 1px solid #909098; border-bottom: 1px solid #909098; background: #fff; }
.sec-head.second { margin-top: 5px; }
.x {
  width: 10px; height: 10px; margin-left: 3px; background: #f0f0f0; border: 1px solid #888; position: relative;
}
.x::before, .x::after {
  content: ""; position: absolute; left: 0; top: 3px; width: 8px; height: 1px; background: #111;
}
.x::before { transform: rotate(45deg); }
.x::after { transform: rotate(-45deg); }
.sec-title { margin: 3px 0 2px 5px; font-size: 12px; font-weight: 400; line-height: 14px; color: #10108a; height: 14px; flex: none; }
.second + .sec-title { margin-bottom: 3px; margin-top: 2px; }
.tabs { height: 20px; display: flex; flex: none; border-bottom: 2px solid #8e9eb6; gap: 1px; margin-bottom: 1px; }
.tab {
  width: 45px; height: 18px; margin-top: 1px; padding-left: 4px; font-size: 12px; line-height: 18px;
  background: linear-gradient(#eaf2fe, #c8ddf8); border: 1px solid #a8c0e0; border-bottom: 0; border-radius: 3px 3px 0 0; color: #111;
}
.tab.act {
  width: 51px; height: 20px; margin-top: 0; padding-left: 6px; background: #f8f9fc; border-top: 2px solid #f6b030; border-color: #f6b030 #c0c8d4 #f8f9fc; line-height: 16px;
}
.tab:nth-child(3) { margin-left: 1px; }
.list {
  background: #fff; border: 1px solid #aaa; display: flex; overflow: hidden; flex: none;
}
.list-a { height: 83px; margin-bottom: 1px; }
.list-b { height: 165px; }
.list ul { list-style: none; margin: 0; padding: 1px 0 0 1px; flex: 1; min-width: 0; }
.list li {
  height: 16px; display: flex; align-items: center; gap: 3px; padding-left: 2px;
  font: 10px/16px "DejaVu Sans Mono", monospace; color: #111;
}
.list-a li svg { width: 16px; height: 15px; }
.list-b li svg { width: 14px; height: 14px; margin-left: 2px; }
.list-b li { gap: 2px; }
.list li.sel { background: #3363a8; color: #fff; }
.sb { width: 17px; flex: none; display: flex; flex-direction: column; background: #f0f6ff; padding-right: 1px; }
.sb-btn {
  display: block; height: 17px; width: 16px; flex: none; position: relative; border: 1px solid #9ab8e0; border-radius: 2px;
  background: linear-gradient(#dfeafc, #b8d0f2);
}
.sb-btn::after {
  content: ""; position: absolute; left: 3px; top: 4px; width: 6px; height: 6px;
  border: 2px solid #33415e; border-width: 2px 0 0 2px; transform: rotate(45deg);
}
.sb-btn.up::after { top: 6px; }
.sb-btn.down { margin-top: auto; }
.sb-btn.down::after { transform: rotate(225deg); top: 2px; }
.sb-thumb { display: block; width: 16px; flex: none; border: 1px solid #a8c4e8; border-radius: 2px; background: linear-gradient(90deg, #e6f0fe, #c8dcf8); position: relative; }
.th-a { height: 10px; }
.th-b { height: 33px; }
.th-c { height: 110px; }
.th-b::after, .th-c::after {
  content: ""; position: absolute; left: 5px; right: 5px; top: 50%; height: 5px; margin-top: -3px;
  background: repeating-linear-gradient(#8a98ac 0 1px, transparent 1px 2px);
}
.objcombo {
  height: 21px; background: #fff; border: 1px solid #aaa; display: flex; align-items: center; justify-content: space-between;
  font: 10px "DejaVu Sans Mono", monospace; padding: 0 1px 0 3px; flex: none; color: #111;
}
.objcombo .sb-btn { margin: 0; height: 19px; }
.props {
  margin-top: 5px; height: 188px; background: #fff; border: 1px solid #aaa; border-left: 2px solid #aaa; display: flex; flex: none; overflow: hidden;
}
.prop-rows { flex: 1; min-width: 0; }
.p { height: 17px; display: grid; grid-template-columns: 99px 1fr; border-bottom: 1px solid #b8b8b8; line-height: 16px; }
.p span:first-child { padding-left: 4px; font-size: 12px; background: #f4f4f6; border-right: 2px solid #b8b8b8; color: #111; }
.p.cur span:first-child { box-shadow: inset 1px 0 0 #111; }
.p span:last-child { padding-left: 2px; font: 10px/16px "DejaVu Sans Mono", monospace; color: #0a0a90; }
.desc { height: 58px; margin-top: 1px; background: #fff; border: 1px solid #aaa; border-left: 2px solid #888; }
.desc strong { display: block; height: 15px; background: #e9e8ee; font: bold 10px/15px "DejaVu Sans Mono", monospace; color: #1010e0; letter-spacing: .2px; }
.desc p { margin: 0; font-size: 12px; line-height: 16px; }

/* status */
.status {
  height: 20px; display: flex; align-items: center; color: #0f2a78;
  background: linear-gradient(#8fb4e6 0, #d6e6fc 2px, #b8d2f6 60%, #a6c6f2 90%, #2f5ea8 100%);
  font: 11px/20px "Liberation Sans", "Noto Sans CJK SC", sans-serif;
}
.st { height: 18px; line-height: 17px; padding-left: 5px; border-right: 2px solid #e0ecfc; white-space: nowrap; flex: none; }
.st1 { width: 141px; letter-spacing: -.35px; }
.st2 { width: 179px; padding-left: 3px; letter-spacing: .2px; }
.st3 { width: 180px; padding-left: 4px; font-size: 12px; }
.st4 { border: 0; padding-left: 4px; letter-spacing: .3px; }
.taskstrip { height: 3px; background: #3a78d8; display: flex; }
.start { width: 95px; background: #5cae5c; }
.task { width: 35px; margin-left: 5px; background: #8cc0f8; }
```
